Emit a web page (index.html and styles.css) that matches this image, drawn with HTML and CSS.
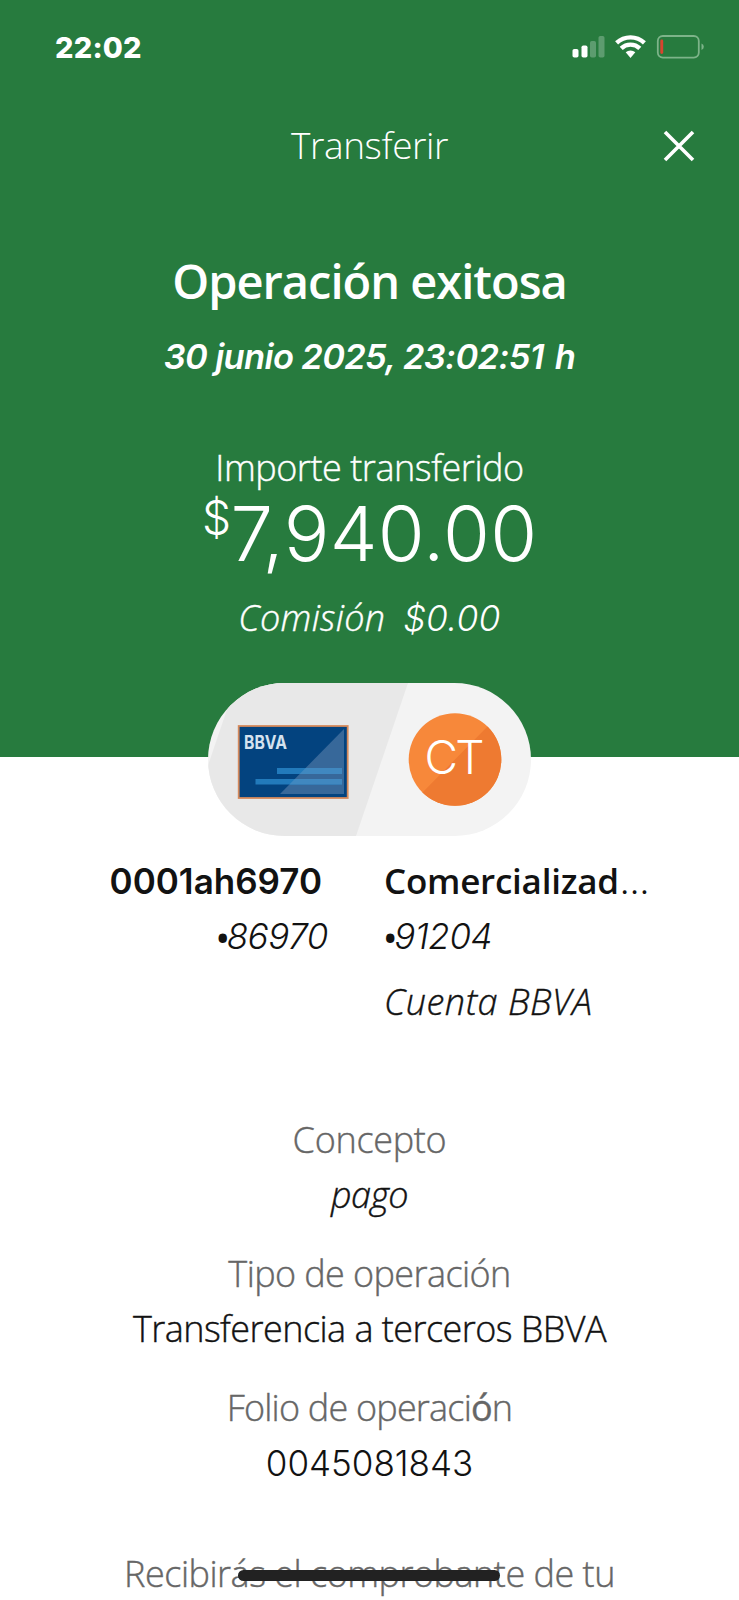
FILE: index.html
```
<!DOCTYPE html>
<html lang="es">
<head>
<meta charset="utf-8">
<title>Transferir</title>
<link rel="stylesheet" href="styles.css">
</head>
<body>
<main class="screen">
  <header class="hero">
    <div class="status">
      <span class="clock">22:02</span>
      <svg class="indicators" width="132" height="26" viewBox="0 0 132 26">
        <g fill="#fff">
          <rect x="0.5" y="15" width="6" height="8.5" rx="1.8"/>
          <rect x="9.5" y="11.5" width="6" height="12" rx="1.8"/>
          <g opacity="0.25">
            <rect x="18" y="7" width="6" height="16.5" rx="1.8"/>
            <rect x="26.5" y="2" width="6" height="21.500" rx="1.8"/>
          </g>
          <path d="M53.700 18.300a7.200 7.200 0 0 1 9.600 0L58.500 24z"/>
        </g>
        <g fill="none" stroke="#fff" stroke-width="4.400">
          <path d="M44.600 8.800a20.500 20.500 0 0 1 27.800 0"/>
          <path d="M49.200 14.300a13.500 13.500 0 0 1 18.600 0"/>
        </g>
        <rect x="85.800" y="2" width="41" height="21.600" rx="5" fill="none" stroke="#7db489" stroke-width="1.800"/>
        <rect x="88.300" y="5.500" width="2.900" height="14.500" rx="1.400" fill="#d8452f"/>
        <path d="M129.500 9.500q2.300 1 2.300 3.300t-2.300 3.300z" fill="#7db489"/>
      </svg>
    </div>
    <div class="bar">
      <span class="bar-title">Transferir</span>
      <svg class="close" width="32" height="32" viewBox="0 0 32 32"><path d="M2 2L30 30M30 2L2 30" stroke="#fff" stroke-width="3.600"/></svg>
    </div>
    <h1 class="title">Operación exitosa</h1>
    <p class="date">30 junio 2025, 23:02:51 <span class="unit">h</span></p>
    <p class="label">Importe transferido</p>
    <p class="amount"><span class="currency">$</span><span>7<span class="comma">,</span>940.00</span></p>
    <p class="fee"><span>Comisión</span><span class="fee-value">$0.00</span></p>
  </header>

  <svg class="pill" width="323" height="153" viewBox="0 0 323 153">
    <defs>
      <clipPath id="pill-shape"><rect width="323" height="153" rx="76.500"/></clipPath>
      <clipPath id="avatar-shape"><circle cx="247" cy="76.500" r="46.300"/></clipPath>
    </defs>
    <g clip-path="url(#pill-shape)">
      <rect width="323" height="153" fill="#f3f3f3"/>
      <path d="M28 0H200L148 153H-24z" fill="#e8e8e8"/>
    </g>
    <rect x="30.700" y="43" width="109" height="72" fill="#03437f" stroke="#d58a5c" stroke-width="1.800"/>
    <path d="M136 46V111H72z" fill="#37689a"/>
    <path d="M69 85H134V91H69zM47.500 96H134V101.500H47.500z" fill="#227abb"/>
    <path d="M97.600 85H134V91H91.700zM86.800 96H134V101.500H81.400z" fill="#4088c0"/>
    <text class="card-logo" x="36" y="66" textLength="43" lengthAdjust="spacingAndGlyphs">BBVA</text>
    <g clip-path="url(#avatar-shape)">
      <rect x="200" y="30" width="94" height="94" fill="#f7883a"/>
      <path d="M294 30V124H200L214 110L279 44z" fill="#ee7a31"/>
    </g>
    <text class="initials" x="216.500" y="90.500" textLength="60">CT</text>
  </svg>

  <section class="accounts">
    <div class="account from">
      <strong class="name name-from">0001ah6970</strong>
      <span class="number"><b class="dot">•</b>86970</span>
    </div>
    <div class="account to">
      <strong class="name name-to">Comercializad<span class="dots">…</span></strong>
      <span class="number"><b class="dot">•</b>91204</span>
      <span class="bank">Cuenta BBVA</span>
    </div>
  </section>

  <dl class="details">
    <dt class="concept">Concepto</dt>
    <dd class="italic">pago</dd>
    <dt>Tipo de operación</dt>
    <dd class="tight">Transferencia a terceros BBVA</dd>
    <dt class="folio-label">Folio de operaci<span class="accent">ó</span>n</dt>
    <dd class="folio">0045081843</dd>
  </dl>
  <p class="notice">Recibirás el comprobante de tu</p>
  <div class="home-bar"></div>
</main>
</body>
</html>
```
FILE: styles.css
```
* { box-sizing: border-box; margin: 0; padding: 0; }

body { background: #fff; }

.screen {
  position: relative;
  width: 739px;
  height: 1600px;
  overflow: hidden;
  display: flex;
  flex-direction: column;
  align-items: center;
  font: 300 36px/40px "Open Sans", sans-serif;
  color: #121212;
}

.hero {
  flex: none;
  width: 739px;
  height: 757px;
  background: #277b3e;
  color: #fff;
  text-align: center;
}

.status {
  display: flex;
  justify-content: space-between;
  align-items: center;
  height: 94px;
  padding: 0 35px 0 55px;
}
.clock { font: 800 29px/40px Inter, sans-serif; letter-spacing: 0.2px; padding-top: 1px; }

.bar {
  display: grid;
  grid-template-columns: 1fr auto 1fr;
  align-items: center;
  height: 104px;
}
.bar-title { grid-column: 2; font-size: 37px; letter-spacing: -0.4px; margin-top: -2px; }
.close { justify-self: end; margin-right: 44px; }

.label, .fee, .bank, .details dt, .details .italic, .details .tight, .notice {
  -webkit-text-stroke: 0.4px currentColor;
}

.title { margin-top: 56px; font-size: 47px; font-weight: 600; line-height: 54px; letter-spacing: -1px; }
.date { margin-top: 29px; font: italic 600 34.500px/40px Inter, sans-serif; letter-spacing: -0.65px; }
.unit { margin-left: 3px; }
.label { margin-top: 71px; letter-spacing: -0.45px; }
.amount {
  display: flex;
  justify-content: center;
  height: 80px;
  margin-top: 5px;
  font: 300 76px/80px Inter, sans-serif;
  letter-spacing: 0.3px;
}
.comma { margin-left: -11px; }
.currency { width: 29px; font: 300 46px/48px Inter, sans-serif; letter-spacing: -1px; }
.fee { display: flex; justify-content: center; gap: 18px; margin-top: 25px; font-style: italic; letter-spacing: 0.3px; }
.fee-value { font: italic 300 35.500px/40px Inter, sans-serif; letter-spacing: 0.2px; margin-top: 1px; -webkit-text-stroke: 0; }

.pill { flex: none; margin-top: -74px; }
.card-logo { font: 700 19px Inter, sans-serif; fill: #d5e2ef; }
.initials { font: 300 46px Inter, sans-serif; fill: #fff; }

.accounts {
  display: grid;
  grid-template-columns: 328px 1fr;
  column-gap: 56px;
  width: 739px;
  height: 258px;
  padding-top: 25px;
}
.account { display: flex; flex-direction: column; }
.from { align-items: flex-end; }
.name { font-size: 35px; font-weight: 600; line-height: 40px; }
.name-from { font-family: Inter, sans-serif; margin-right: 6px; }
.name-to { height: 40px; letter-spacing: -0.25px; }
.dots { margin-left: 1px; font-weight: 300; letter-spacing: 0; font-family: Inter, sans-serif; }
.number { height: 40px; margin-top: 15px; font: italic 300 35px/40px Inter, sans-serif; letter-spacing: -0.4px; }
.dot { font: italic 700 36px/36px "Open Sans", sans-serif; font-size: 30px; letter-spacing: -1px; }
.bank { margin-top: 26px; font-style: italic; letter-spacing: 0.5px; }

.details { margin-top: 26px; text-align: center; }
.details dt { margin-top: 39px; color: #666; letter-spacing: -0.6px; }
.details .concept { margin-top: 0; letter-spacing: -0.3px; }
.details .folio-label { letter-spacing: -0.8px; }
.details dd { margin-top: 15px; }
.details .italic { font-style: italic; letter-spacing: -0.6px; }
.details .tight { letter-spacing: -0.55px; }
.details .folio { font: 300 35px/40px Inter, sans-serif; letter-spacing: 0; }
.accent { font-weight: 500; }

.notice { margin-top: 71px; color: #666; letter-spacing: -0.5px; }
.home-bar {
  position: absolute;
  left: 238px;
  top: 1570px;
  width: 262px;
  height: 11px;
  border-radius: 6px;
  background: #222;
}
```
